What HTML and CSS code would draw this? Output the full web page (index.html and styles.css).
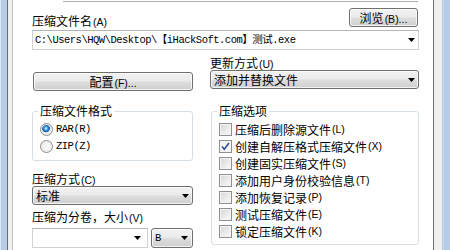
FILE: index.html
```html
<!DOCTYPE html>
<html lang="zh-CN">
<head>
    <meta charset="UTF-8">
    <meta name="viewport" content="width=device-width, initial-scale=1.0">
    <title>压缩文件名和参数</title>
    <link rel="stylesheet" href="styles.css">
</head>
<body>
    <div class="window">
        <div class="frame-left"></div>
        <div class="panel">
            <div class="top-edge"></div>

            <div class="head-row">
                <label class="label head-label">压缩文件名<span class="key">(A)</span></label>
                <button class="btn btn-browse">浏览<span class="key">(B)...</span></button>
            </div>
            <div class="combo combo-edit path-combo">
                <span class="combo-text mono">C:\Users\HQW\Desktop\【iHackSoft.com】测试.exe</span>
                <svg class="arrow" width="7" height="4" viewBox="0 0 7 4"><path d="M0 0h7L3.5 4z"/></svg>
            </div>

            <div class="columns">
                <div class="col">
                    <button class="btn btn-config">配置<span class="key">(F)...</span></button>

                    <fieldset class="group group-format">
                        <legend>压缩文件格式</legend>
                        <div class="opt"><span class="radio checked"></span><span class="mono">RAR(R)</span></div>
                        <div class="opt"><span class="radio"></span><span class="mono">ZIP(Z)</span></div>
                    </fieldset>

                    <div class="label label-method">压缩方式<span class="key">(C)</span></div>
                    <div class="combo combo-list method-combo">
                        <span class="combo-text">标准</span>
                        <svg class="arrow" width="7" height="4" viewBox="0 0 7 4"><path d="M0 0h7L3.5 4z"/></svg>
                    </div>

                    <div class="label label-split">压缩为分卷，大小<span class="key">(V)</span></div>
                    <div class="split-row">
                        <div class="combo combo-edit split-size">
                            <span class="combo-text"></span>
                            <svg class="arrow" width="7" height="4" viewBox="0 0 7 4"><path d="M0 0h7L3.5 4z"/></svg>
                        </div>
                        <div class="combo combo-list split-unit">
                            <span class="combo-text mono">B</span>
                            <svg class="arrow" width="7" height="4" viewBox="0 0 7 4"><path d="M0 0h7L3.5 4z"/></svg>
                        </div>
                    </div>
                </div>

                <div class="col">
                    <div class="label label-update">更新方式<span class="key">(U)</span></div>
                    <div class="combo combo-list update-combo">
                        <span class="combo-text">添加并替换文件</span>
                        <svg class="arrow" width="7" height="4" viewBox="0 0 7 4"><path d="M0 0h7L3.5 4z"/></svg>
                    </div>

                    <fieldset class="group group-options">
                        <legend>压缩选项</legend>
                        <div class="opt"><span class="check"></span>压缩后删除源文件<span class="key">(L)</span></div>
                        <div class="opt"><span class="check checked"><svg width="11" height="11" viewBox="0 0 11 11"><path d="M2 5.5l2.3 2.8L9 2" fill="none" stroke="#2c4f8f" stroke-width="1.6"/></svg></span>创建自解压格式压缩文件<span class="key">(X)</span></div>
                        <div class="opt"><span class="check"></span>创建固实压缩文件<span class="key">(S)</span></div>
                        <div class="opt"><span class="check"></span>添加用户身份校验信息<span class="key">(T)</span></div>
                        <div class="opt"><span class="check"></span>添加恢复记录<span class="key">(P)</span></div>
                        <div class="opt"><span class="check"></span>测试压缩文件<span class="key">(E)</span></div>
                        <div class="opt"><span class="check"></span>锁定压缩文件<span class="key">(K)</span></div>
                    </fieldset>
                </div>
            </div>
        </div>
        <div class="frame-right"></div>
    </div>
</body>
</html>
```

FILE: styles.css
```css
* {
    box-sizing: border-box;
}
body {
    margin: 0;
    font-family: "Noto Sans CJK SC", "Liberation Sans", sans-serif;
    font-size: 12px;
    color: #000;
    background: #fff;
}
.window {
    display: flex;
    width: 450px;
    height: 250px;
    overflow: hidden;
}
.frame-left {
    width: 12px;
    background: linear-gradient(to right, #dce7f4 0 1px, #b6cce7 1px 7px, #6e6e6e 7px 8px, #f0f0f0 8px);
}
.frame-right {
    flex: 1;
    background: linear-gradient(to right, #f0f0f0 0 8px, #b6cce7 8px 9px, #c9daee 9px 10px, #b6cce7 10px);
}
.panel {
    width: 422px;
    border-left: 1px solid #c3c3c3;
    border-right: 1px solid #6e6e6e;
    background: #fff;
    padding-left: 19px;
}
.top-edge {
    margin-left: 31px;
    width: 355px;
    height: 2px;
    border-bottom: 1px solid #b0b0b0;
}
.label {
    display: block;
    line-height: 14px;
    height: 14px;
    white-space: nowrap;
}
.key {
    font-family: "Liberation Sans", sans-serif;
    font-size: 10.5px;
    margin-left: 1px;
}
.mono {
    font-family: "Liberation Mono", "Noto Sans CJK SC", monospace;
    font-size: 10.5px;
    letter-spacing: -0.5px;
}
.head-row {
    display: flex;
    justify-content: space-between;
    align-items: flex-end;
    width: 386px;
    height: 19px;
    margin-top: 6px;
}
.head-label {
    margin-bottom: -1px;
}
.btn {
    font: inherit;
    color: #000;
    height: 19px;
    padding: 0;
    line-height: 17px;
    border: 1px solid #707070;
    border-radius: 3px;
    background: linear-gradient(#f2f2f2 0%, #ebebeb 45%, #dddddd 55%, #cfcfcf 100%);
    box-shadow: inset 0 0 0 1px rgba(255, 255, 255, 0.75);
}
.btn-browse {
    width: 69px;
}
.btn-config {
    width: 160px;
    margin-left: 1px;
    margin-top: 22px;
}
.combo {
    display: flex;
    align-items: center;
    height: 19px;
    padding-left: 2px;
    padding-right: 3px;
    white-space: nowrap;
}
.combo-text {
    flex: 1;
    overflow: hidden;
    line-height: 17px;
}
.combo-edit {
    background: #fff;
    border: 1px solid #d2d2d2;
    border-top-color: #b5b5b5;
}
.combo-list {
    border: 1px solid #707070;
    border-radius: 3px;
    background: linear-gradient(#f2f2f2 0%, #ebebeb 45%, #dddddd 55%, #cfcfcf 100%);
    box-shadow: inset 0 0 0 1px rgba(255, 255, 255, 0.75);
}
.arrow {
    flex: none;
    fill: #000;
}
.path-combo {
    width: 387px;
    height: 20px;
    margin-top: 3px;
}
.columns {
    display: grid;
    grid-template-columns: 161px 209px;
    column-gap: 17px;
    align-items: start;
}
.group {
    margin: 0;
    min-width: 0;
    padding: 2px 0 4px 7px;
    border: 1px solid #d5dfe5;
    border-radius: 3px;
}
.group legend {
    padding: 0 2px;
    margin-left: -2px;
    line-height: 16px;
}
.group-format {
    width: 161px;
    height: 58px;
    margin-top: 12px;
}
.group-options {
    width: 208px;
    height: 142px;
    margin-top: 14px;
    margin-left: 1px;
}
.opt {
    display: flex;
    align-items: center;
    height: 17px;
    line-height: 17px;
    white-space: nowrap;
}
.radio {
    width: 13px;
    height: 13px;
    margin-right: 3px;
    border-radius: 50%;
    border: 1px solid #8d8d8d;
    background: radial-gradient(circle at 50% 50%, #f6f6f6 0 3px, #dcdcdc 6px);
    box-shadow: inset 0 0 0 1px #f4f4f4;
}
.radio.checked {
    background: radial-gradient(circle at 45% 40%, #b8e0ff 0 0.8px, #3c9ae6 1.8px, #145aa8 3.6px, #f2f2f2 4.2px, #dcdcdc 6px);
}
.check {
    display: flex;
    align-items: center;
    justify-content: center;
    width: 13px;
    height: 13px;
    margin-right: 3px;
    border: 1px solid #8e8f8f;
    background: linear-gradient(135deg, #d6d6d6, #fbfbfb);
    box-shadow: inset 0 0 0 1px #f4f4f4;
}
.check.checked {
    background: #f4f4f4;
}
.label-method {
    margin-top: 11px;
}
.method-combo {
    width: 161px;
    padding-left: 3px;
}
.label-split {
    margin-top: 5px;
}
.split-row {
    display: flex;
    gap: 3px;
    margin-top: 4px;
}
.split-size {
    width: 116px;
    height: 20px;
    padding-right: 6px;
}
.split-unit {
    width: 42px;
    height: 20px;
    padding-left: 3px;
    padding-right: 4px;
}
.label-update {
    margin-top: 6px;
}
.update-combo {
    width: 209px;
    padding-left: 3px;
}
```
